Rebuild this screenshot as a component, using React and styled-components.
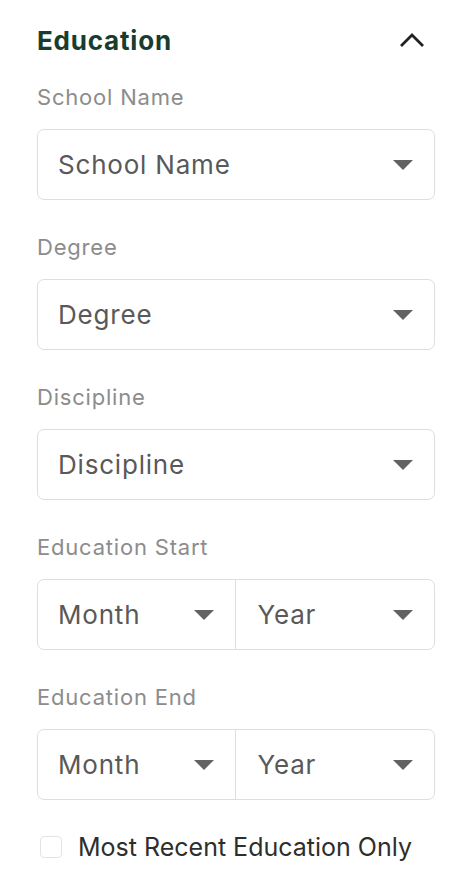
import React from "react";
import styled, { createGlobalStyle } from "styled-components";

const Global = createGlobalStyle`
  html, body { margin: 0; padding: 0; background: #ffffff; }
  body { font-family: Inter, "Liberation Sans", Arial, sans-serif; -webkit-font-smoothing: antialiased; }
`;

const Page = styled.div`
  padding: 20px 39px 0 37px;
  box-sizing: border-box;
  width: 474px;
`;

const Header = styled.div`
  display: flex;
  align-items: center;
  justify-content: space-between;
  height: 40px;
  margin-bottom: 22px;
`;

const Title = styled.h2`
  margin: 0;
  font-size: 26px;
  font-weight: 700;
  color: #183d2e;
  letter-spacing: 0.8px;
`;

const IconButton = styled.button`
  border: none;
  background: none;
  padding: 0;
  width: 28px;
  height: 28px;
  display: flex;
  align-items: center;
  justify-content: center;
  margin-right: 9px;
  color: #222;
`;

const Field = styled.div`
  display: flex;
  flex-direction: column;
  margin-bottom: 32px;
`;

const Label = styled.label`
  font-size: 22px;
  line-height: 30px;
  letter-spacing: 0.8px;
  color: #8c8c8c;
  margin-bottom: 17px;
`;

const SelectRow = styled.div`
  display: flex;
  height: 71px;
  border: 1.5px solid #dedede;
  border-radius: 7px;
  box-sizing: border-box;
  overflow: hidden;
`;

const SelectPart = styled.div`
  flex: 1;
  display: flex;
  align-items: center;
  justify-content: space-between;
  padding: 0 21px 0 20px;
  font-size: 26px;
  letter-spacing: 0.8px;
  color: #595959;
  & + & {
    border-left: 1.5px solid #dedede;
    padding-left: 22px;
  }
`;

const Caret = () => (
  <svg width="20" height="10" viewBox="0 0 20 10">
    <path d="M0 0 H20 L10 10 Z" fill="#626262" />
  </svg>
);

const CheckRow = styled.label`
  display: flex;
  align-items: center;
  gap: 16px;
  margin-top: 15px;
  padding-left: 3px;
  font-size: 25px;
  color: #2e2e2e;
`;

const Box = styled.span`
  width: 22px;
  height: 22px;
  border: 1.5px solid #e3e3e3;
  border-radius: 4px;
  box-sizing: border-box;
  background: #fff;
`;

const Select = ({ parts }) => (
  <SelectRow>
    {parts.map((p) => (
      <SelectPart key={p}>
        <span>{p}</span>
        <Caret />
      </SelectPart>
    ))}
  </SelectRow>
);

const fields = [
  { label: "School Name", parts: ["School Name"] },
  { label: "Degree", parts: ["Degree"] },
  { label: "Discipline", parts: ["Discipline"] },
  { label: "Education Start", parts: ["Month", "Year"] },
  { label: "Education End", parts: ["Month", "Year"] },
];

export default function App() {
  return (
    <>
      <Global />
      <Page>
        <Header>
          <Title>Education</Title>
          <IconButton aria-label="collapse">
            <svg width="26" height="16" viewBox="0 0 26 16">
              <path d="M2 14 L13 3 L24 14" fill="none" stroke="#222" strokeWidth="2.8" />
            </svg>
          </IconButton>
        </Header>
        {fields.map((f) => (
          <Field key={f.label}>
            <Label>{f.label}</Label>
            <Select parts={f.parts} />
          </Field>
        ))}
        <CheckRow>
          <Box />
          Most Recent Education Only
        </CheckRow>
      </Page>
    </>
  );
}
